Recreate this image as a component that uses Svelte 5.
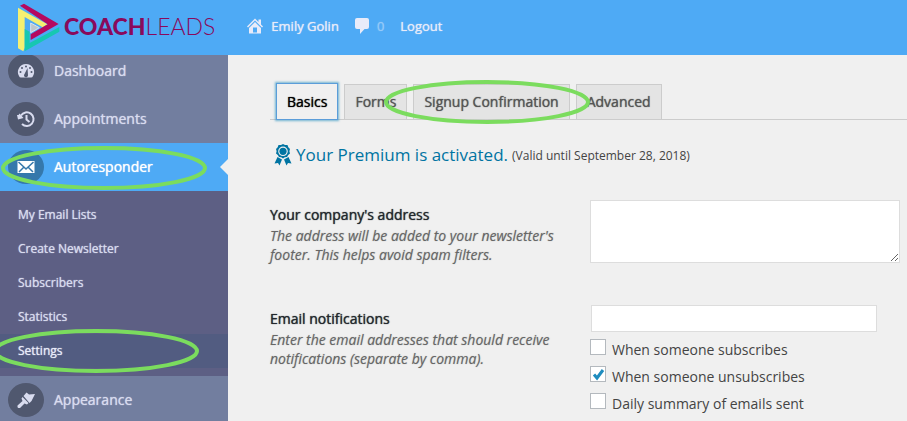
<script>
    let address = "";
    let emails = "";

    const tabs = ["Basics", "Forms", "Signup Confirmation", "Advanced"];
    let activeTab = "Basics";

    const submenu = ["My Email Lists", "Create Newsletter", "Subscribers", "Statistics", "Settings"];

    let notifications = [
        { id: "subscribes", label: "When someone subscribes", on: false },
        { id: "unsubscribes", label: "When someone unsubscribes", on: true },
        { id: "daily", label: "Daily summary of emails sent", on: false },
    ];
</script>

<div class="page">
    <header>
        <a class="brand" href="#home">
            <svg width="43" height="50" viewBox="51 6 129 150" aria-hidden="true">
                <path fill="#f5f072" d="M54 20 142 70 128 79 74 48V140L70 151 54 142z" />
                <path fill="#b5095f" d="M60 14 72 8 176 69 92 117V100L143 70z" />
                <path fill="#16c7b2" d="M178 78V92L74 151V84L89 92V126z" />
                <path fill="#bcc6cb" stroke="#d9e3ee" stroke-width="3" d="M92 66 118 80 92 95z" />
            </svg>
            <span class="wordmark"><b>COACH</b>LEADS</span>
        </a>
        <nav class="toolbar">
            <a href="#profile">
                <svg width="16" height="16" viewBox="0 0 16 16" aria-hidden="true">
                    <path d="M8 .5 11.500 4V1.500H14v5l2 2-1 1-7-7-7 7-1-1z" />
                    <path fill-rule="evenodd" d="M8 4l6 6v5.500H2V10zM6 9.500v5h4v-5z" />
                </svg>
                <span>Emily Golin</span>
            </a>
            <a class="comments" href="#comments" aria-label="Comments">
                <svg width="14" height="16" viewBox="0 0 14 16" aria-hidden="true">
                    <path d="M2 0h10q2 0 2 2v7q0 2-2 2H9.500L5 16v-5H2q-2 0-2-2V2q0-2 2-2z" />
                </svg>
                <span>0</span>
            </a>
            <a href="#logout">Logout</a>
        </nav>
    </header>

    <div class="body">
        <aside>
            <a class="item" href="#dashboard">
                <span class="disc">
                    <svg width="18" height="18" viewBox="0 0 18 18" aria-hidden="true">
                        <path d="M9 2a8 8 0 0 1 7 12q-.5 1.500-2 1.500H4q-1.500 0-2-1.500A8 8 0 0 1 9 2z" />
                        <g class="cut">
                            <circle cx="9" cy="4.500" r="1" />
                            <circle cx="5" cy="6" r="1" />
                            <circle cx="13" cy="6" r="1" />
                            <circle cx="3.500" cy="10" r="1" />
                            <circle cx="14.500" cy="10" r="1" />
                            <path d="M10.500 6 11 13a2 2 0 1 1-3.500-1z" />
                        </g>
                    </svg>
                </span>
                Dashboard
            </a>
            <a class="item" href="#appointments">
                <span class="disc">
                    <svg width="18" height="18" viewBox="0 0 18 18" aria-hidden="true">
                        <path class="line" d="M4 5.500A6.800 6.800 0 1 1 5 14" />
                        <path d="M0 5h1.500l1-1.500L6.500 8 1 9.500z" />
                        <path class="thin" d="M9.500 5v4.500l3 2.500" />
                    </svg>
                </span>
                Appointments
            </a>
            <a class="item current" href="#autoresponder">
                <span class="disc">
                    <svg width="18" height="18" viewBox="0 0 18 18" aria-hidden="true">
                        <path d="M.5 3h17v12H.5z" />
                        <path class="fold" d="M1.500 4 9 11l7.500-7M2 14l5-5M16 14l-5-5" />
                    </svg>
                </span>
                Autoresponder
                <svg class="ring" width="206" height="46" viewBox="0 0 206 46" aria-hidden="true">
                    <ellipse cx="103" cy="23" rx="101" ry="20" />
                </svg>
            </a>
            <ul class="submenu">
                {#each submenu as entry}
                    <li>
                        <a class:selected={entry === "Settings"} href="#{entry}">
                            {entry}
                            {#if entry === "Settings"}
                                <svg class="ring" width="206" height="46" viewBox="0 0 206 46" aria-hidden="true">
                                    <ellipse cx="103" cy="23" rx="101" ry="20" />
                                </svg>
                            {/if}
                        </a>
                    </li>
                {/each}
            </ul>
            <a class="item" href="#appearance">
                <span class="disc">
                    <svg width="18" height="18" viewBox="0 0 18 18" aria-hidden="true">
                        <path d="M9.500 1.500 12 3.500l6-.5-3.500 7-2 2L6.500 5z" />
                        <path d="M5.500 6 11.500 12l-1.500 1.500-2.500-1L3 17Q0 17.500 .5 14.500L5.500 10 4.500 7.500z" />
                    </svg>
                </span>
                Appearance
            </a>
        </aside>

        <main>
            <div class="tabs" role="tablist">
                {#each tabs as tab}
                    <button
                        type="button"
                        role="tab"
                        aria-selected={tab === activeTab}
                        class:active={tab === activeTab}
                        on:click={() => (activeTab = tab)}
                    >
                        {tab}
                        {#if tab === "Signup Confirmation"}
                            <svg class="ring" width="206" height="46" viewBox="0 0 206 46" aria-hidden="true">
                                <ellipse cx="103" cy="23" rx="101" ry="20" />
                            </svg>
                        {/if}
                    </button>
                {/each}
            </div>

            <p class="premium">
                <svg width="18" height="22" viewBox="0 0 18 22" aria-hidden="true">
                    <path
                        fill-rule="evenodd"
                        d="M9 0l2 1 2.500 0 .8 2.200L16 5l-.6 2.200L16 9.500l-1.800 1.600L13 13l-2.200.2L9 14.500l-1.800-1.300L5 13l-1.200-2L2 9.500l.6-2.300L2 5l1.700-1.800L4.500 1 7 1zM9 2.500a4.800 4.800 0 1 0 0 9.600 4.800 4.800 0 0 0 0-9.600z"
                    />
                    <circle cx="9" cy="7.300" r="3.600" />
                    <path d="M3.500 13 8 15.500 5.500 21.500 4 19 .5 19.500zM14.500 13 10 15.500l2.500 6L14 19l3.500.5z" />
                </svg>
                <strong>Your Premium is activated.</strong>
                <small>(Valid until September 28, 2018)</small>
            </p>

            <form>
                <div class="row">
                    <div class="about">
                        <label for="address">Your company's address</label>
                        <p>The address will be added to your newsletter's footer. This helps avoid spam filters.</p>
                    </div>
                    <div class="field">
                        <textarea id="address" bind:value={address}></textarea>
                    </div>
                </div>
                <div class="row">
                    <div class="about">
                        <label for="emails">Email notifications</label>
                        <p>Enter the email addresses that should receive notifications (separate by comma).</p>
                    </div>
                    <div class="field">
                        <input id="emails" type="text" bind:value={emails} />
                        {#each notifications as item}
                            <label class="check" for={item.id}>
                                <input id={item.id} type="checkbox" bind:checked={item.on} />
                                <svg width="16" height="16" viewBox="0 0 16 16" aria-hidden="true">
                                    <path d="M4 8.500 7 12l6-8" />
                                </svg>
                                <span>{item.label}</span>
                            </label>
                        {/each}
                    </div>
                </div>
            </form>
        </main>
    </div>
</div>

<style>
    :global(body) {
        margin: 0;
        background: #f0f0f0;
        overflow: hidden;
    }

    .page {
        display: flex;
        flex-direction: column;
        height: 100vh;
        overflow: hidden;
        font-family: "Open Sans", "Noto Sans", sans-serif;
        font-size: 14px;
        color: #444;
    }

    a {
        color: inherit;
        text-decoration: none;
    }

    /* regular weight, slightly thickened */
    .toolbar,
    .item,
    .submenu a,
    .tabs button,
    .about label {
        text-shadow: 0 0 1px currentColor;
    }

    header {
        display: flex;
        flex: none;
        align-items: center;
        gap: 32px;
        height: 55px;
        padding: 0 17px;
        background: #4eaaf5;
    }

    .brand {
        display: flex;
        align-items: center;
        gap: 4px;
    }

    .wordmark {
        padding-bottom: 4px;
        color: #890a5c;
        font: 300 23px/46px Lato, sans-serif;
    }

    .wordmark b {
        font-weight: 900;
    }

    .toolbar {
        display: flex;
        align-items: center;
        gap: 16px;
        padding-bottom: 4px;
        color: #e8ebf9;
        font-size: 13px;
        line-height: 48px;
    }

    .toolbar a {
        display: flex;
        align-items: center;
        gap: 8px;
    }

    .toolbar svg {
        fill: currentColor;
    }

    .comments span {
        color: #94c9f8;
    }

    .body {
        display: flex;
        flex: 1;
        min-height: 0;
        overflow: hidden;
    }

    aside {
        flex: none;
        width: 228px;
        /* the menu is scrolled slightly under the header */
        margin-top: -8px;
        background: #727e9f;
    }

    .item {
        position: relative;
        display: flex;
        align-items: center;
        gap: 10px;
        box-sizing: border-box;
        height: 48px;
        padding: 0 0 1px 8px;
        color: #d9dcef;
    }

    .disc {
        display: flex;
        align-items: center;
        justify-content: center;
        width: 36px;
        height: 34px;
        border-radius: 50%;
        background: #50586f;
    }

    .disc svg {
        fill: currentColor;
    }

    .disc .cut {
        fill: #50586f;
    }

    .disc .line,
    .disc .thin,
    .disc .fold {
        fill: none;
        stroke: currentColor;
        stroke-width: 2;
    }

    .disc .fold {
        stroke: #3578ab;
        stroke-width: 1.5;
    }

    .current {
        background: #4eaaf5;
        color: #fff;
    }

    .current .disc {
        background: #3578ab;
    }

    .current::after {
        content: "";
        position: absolute;
        top: 16px;
        right: 0;
        border: solid transparent;
        border-width: 8px 8px 8px 0;
        border-right-color: #f0f0f0;
    }

    .ring {
        position: absolute;
        z-index: 1;
        top: 2px;
        left: 1px;
        fill: none;
        stroke: #7bdc5e;
        stroke-width: 4;
        pointer-events: none;
    }

    .submenu {
        margin: 0;
        padding: 7px 0 8px;
        list-style: none;
        background: #5d5f84;
    }

    .submenu a {
        position: relative;
        display: block;
        padding-left: 18px;
        color: #d9dcef;
        font-size: 12px;
        line-height: 34px;
    }

    .submenu .selected {
        background: #525c81;
        color: #e8ebf9;
    }

    .submenu .ring {
        top: -6px;
        left: -7px;
    }

    main {
        flex: 1;
        min-width: 0;
        padding-top: 28px;
    }

    .tabs {
        display: flex;
        gap: 6px;
        margin-left: 42px;
        padding-left: 6px;
        border-bottom: 1px solid #ccc;
    }

    .tabs button {
        position: relative;
        margin: 1px 0 0;
        padding: 0 10px;
        border: 1px solid #ccc;
        border-bottom: 0;
        background: #e4e4e4;
        color: #555;
        font: 400 14px/34px "Open Sans", "Noto Sans", sans-serif;
    }

    .tabs .active {
        z-index: 1;
        margin: 0 0 -1px;
        border: 1px solid #5b9dd9;
        background: #f0f0f0;
        box-shadow: 0 0 2px 1px rgba(30, 140, 190, 0.6);
        color: #000;
    }

    .tabs .ring {
        top: -6px;
        left: -30px;
    }

    .premium {
        display: flex;
        align-items: center;
        gap: 4px;
        margin: 20px 0 0 46px;
        line-height: 28px;
    }

    .premium svg {
        fill: #0074a2;
    }

    .premium strong {
        color: #0074a2;
        font-size: 17px;
        font-weight: 400;
    }

    .premium small {
        padding-top: 2px;
        font-size: 12px;
    }

    form {
        padding: 30px 7px 0 42px;
    }

    .row {
        display: grid;
        grid-template-columns: 290px 1fr;
        column-gap: 30px;
        margin-bottom: 39px;
    }

    .about {
        padding-top: 4px;
    }

    .about label {
        display: block;
        color: #23282d;
        line-height: 22px;
    }

    .about p {
        margin: 0 0 1px;
        color: #666;
        font-style: italic;
        line-height: 19px;
        text-shadow: 0 0 1px rgba(102, 102, 102, 0.5);
    }

    textarea,
    input[type="text"] {
        display: block;
        box-sizing: border-box;
        border: 1px solid #ddd;
        border-radius: 0;
        background: #fff;
        font: inherit;
    }

    textarea {
        width: 100%;
        height: 63px;
        resize: both;
    }

    input[type="text"] {
        width: calc(100% - 24px);
        height: 27px;
        margin: 1px 0 4px 1px;
    }

    .check {
        display: grid;
        grid-template-columns: 16px 1fr;
        column-gap: 6px;
        height: 27px;
        line-height: 27px;
    }

    .check input,
    .check svg {
        grid-area: 1 / 1;
        box-sizing: border-box;
        width: 16px;
        height: 16px;
        margin: 3px 0 0;
    }

    .check input {
        appearance: none;
        border: 1px solid #b4b9be;
        background: #fff;
    }

    .check svg {
        visibility: hidden;
        fill: none;
        stroke: #1e8cbe;
        stroke-width: 3;
        pointer-events: none;
    }

    .check input:checked + svg {
        visibility: visible;
    }
</style>
